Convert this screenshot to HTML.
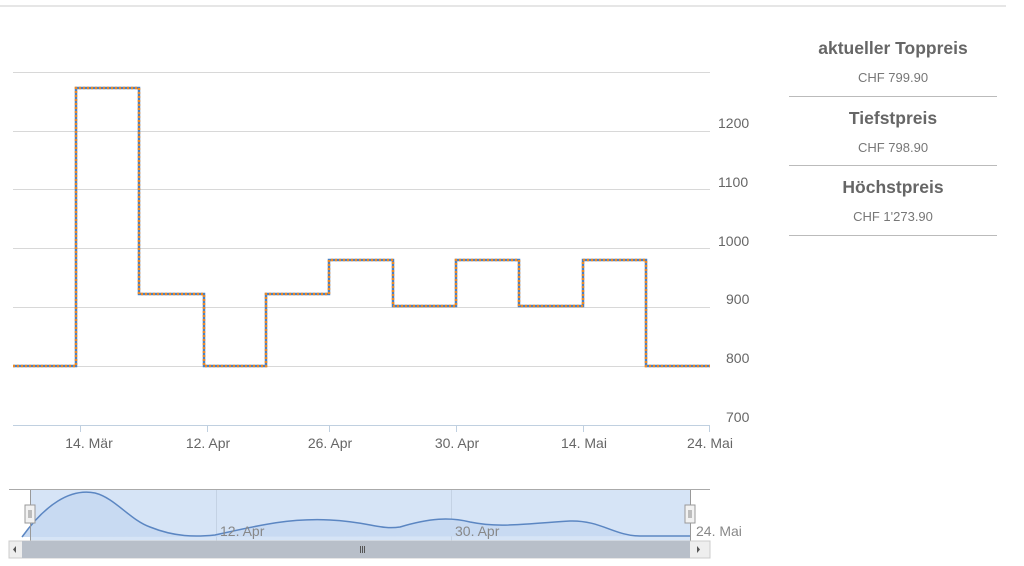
<!DOCTYPE html>
<html><head><meta charset="utf-8"><style>
body{margin:0;width:1024px;height:566px;background:#fff;overflow:hidden;font-family:"Liberation Sans",sans-serif;position:relative}
.p{position:absolute;left:789px;width:208px;text-align:center;color:#666}
.t{font-weight:bold;font-size:17.5px}
.v{font-size:13px;color:#777}
.l{position:absolute;left:789px;width:208px;height:1px;background:#bbb}
</style></head><body>
<div style="position:absolute;left:0;top:5px;width:1006px;height:2px;background:#e6e6e6"></div>
<svg width="1024" height="566" style="position:absolute;left:0;top:0" font-family="Liberation Sans, sans-serif">
<g stroke="#d8d8d8" stroke-width="1">
<line x1="13" y1="72.5" x2="710" y2="72.5"/>
<line x1="13" y1="131.5" x2="710" y2="131.5"/>
<line x1="13" y1="189.5" x2="710" y2="189.5"/>
<line x1="13" y1="248.5" x2="710" y2="248.5"/>
<line x1="13" y1="307.5" x2="710" y2="307.5"/>
<line x1="13" y1="366.5" x2="710" y2="366.5"/>
</g>
<line x1="13" y1="425.5" x2="710" y2="425.5" stroke="#c0d0e0"/>
<g stroke="#c0d0e0"><line x1="80.5" y1="425" x2="80.5" y2="432"/><line x1="207.5" y1="425" x2="207.5" y2="432"/><line x1="329.5" y1="425" x2="329.5" y2="432"/><line x1="456.5" y1="425" x2="456.5" y2="432"/><line x1="583.5" y1="425" x2="583.5" y2="432"/><line x1="709.5" y1="425" x2="709.5" y2="432"/></g>
<g fill="#666" font-size="14">
<text x="718" y="128">1200</text><text x="718" y="187">1100</text><text x="718" y="246">1000</text>
<text x="726" y="304">900</text><text x="726" y="363">800</text><text x="726" y="422">700</text>
<g text-anchor="middle"><text x="89" y="448">14. Mär</text><text x="208" y="448">12. Apr</text><text x="330" y="448">26. Apr</text><text x="457" y="448">30. Apr</text><text x="584" y="448">14. Mai</text><text x="710" y="448">24. Mai</text></g>
</g>
<path d="M13 366H76V88H139V294H204V366H266V294H329V260H393V306H456V260H519V306H583V260H646V366H710" fill="none" stroke="#4a80c0" stroke-width="2.5"/>
<path d="M13 366H76V88H139V294H204V366H266V294H329V260H393V306H456V260H519V306H583V260H646V366H710" fill="none" stroke="#f08a24" stroke-width="2.5" stroke-dasharray="2,2"/>
<line x1="9" y1="489.5" x2="710" y2="489.5" stroke="#aaa"/>
<rect x="30" y="490" width="661" height="51" fill="#d6e4f6"/>
<line x1="216.5" y1="490" x2="216.5" y2="541" stroke="#c4d2e4"/><line x1="451.5" y1="490" x2="451.5" y2="541" stroke="#c4d2e4"/>
<path d="M22 537 C45 505,70 488,95 493 C115 498,130 520,150 527 C175 537,195 537,215 535 C260 525,290 518,330 520 C370 522,380 530,400 527 C430 518,450 517,470 522 C500 528,520 524,570 521 C600 520,615 536,640 536 H690" fill="#c8daf2" stroke="#5b86c2" stroke-width="1.5"/>
<g fill="#888" font-size="14"><text x="220" y="536">12. Apr</text><text x="455" y="536">30. Apr</text><text x="696" y="536">24. Mai</text></g>
<line x1="30.5" y1="490" x2="30.5" y2="541" stroke="#999"/><line x1="690.5" y1="490" x2="690.5" y2="541" stroke="#999"/>
<rect x="25" y="505" width="10" height="18" fill="#f2f2f2" stroke="#999"/><rect x="685" y="505" width="10" height="18" fill="#f2f2f2" stroke="#999"/>
<line x1="29" y1="510" x2="29" y2="518" stroke="#888"/><line x1="31" y1="510" x2="31" y2="518" stroke="#888"/>
<line x1="689" y1="510" x2="689" y2="518" stroke="#888"/><line x1="691" y1="510" x2="691" y2="518" stroke="#888"/>
<rect x="9" y="541" width="701" height="17" fill="#eee" stroke="#ccc"/>
<rect x="22" y="541" width="668" height="17" fill="#b8bfc9"/>
<g stroke="#555"><line x1="360.5" y1="546" x2="360.5" y2="553"/><line x1="362.5" y1="546" x2="362.5" y2="553"/><line x1="364.5" y1="546" x2="364.5" y2="553"/></g>
<path d="M16 546 L13 549.5 L16 553Z" fill="#555"/><path d="M697 546 L700 549.5 L697 553Z" fill="#555"/>
</svg>
<div class="p t" style="top:38px">aktueller Toppreis</div>
<div class="p v" style="top:70px">CHF 799.90</div>
<div class="l" style="top:96px"></div>
<div class="p t" style="top:108px">Tiefstpreis</div>
<div class="p v" style="top:140px">CHF 798.90</div>
<div class="l" style="top:165px"></div>
<div class="p t" style="top:177px">Höchstpreis</div>
<div class="p v" style="top:209px">CHF 1'273.90</div>
<div class="l" style="top:235px"></div>
</body></html>
